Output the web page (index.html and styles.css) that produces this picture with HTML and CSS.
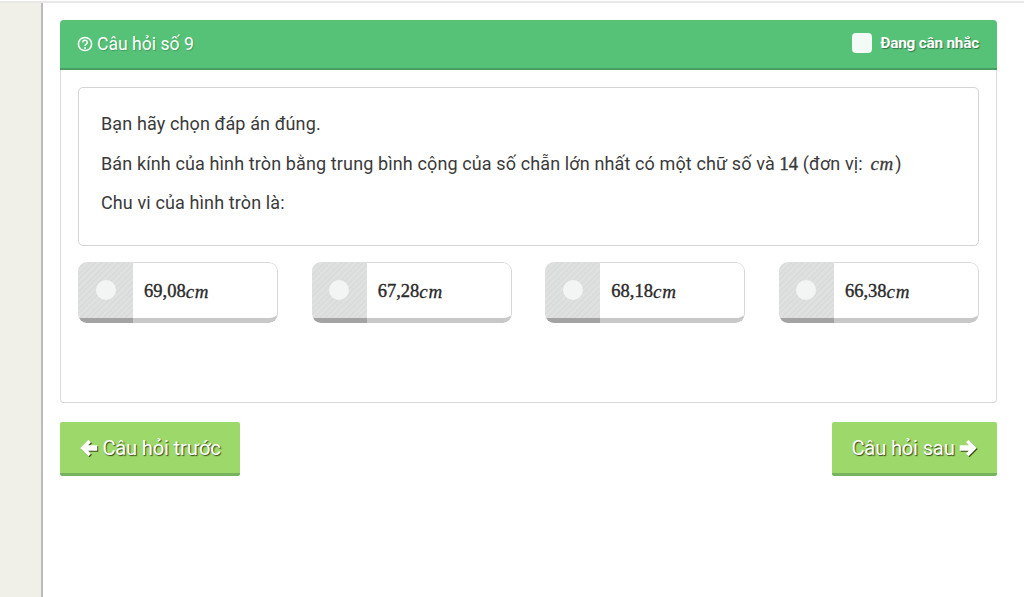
FILE: index.html
```html
<!DOCTYPE html>
<html lang="vi">

<head>
    <meta charset="UTF-8">
    <meta name="viewport" content="width=device-width, initial-scale=1.0">
    <title>Câu hỏi số 9</title>
    <link rel="stylesheet" href="styles.css">
</head>

<body>
    <div class="sidebar"></div>

    <main class="noi-dung">
        <section class="panel">
            <header class="panel-head">
                <h2 class="tieu-de">
                    <svg class="icon-hoi" viewBox="0 0 16 16" width="16" height="16">
                        <circle cx="8" cy="8" r="6.6" fill="none" stroke="#fff" stroke-width="1.5" />
                        <path d="M5.8 6.4a2.2 2.2 0 1 1 3.4 1.8c-.8.5-1.2.9-1.2 1.8" fill="none" stroke="#fff" stroke-width="1.5" />
                        <circle cx="8" cy="12" r="1" fill="#fff" />
                    </svg>
                    Câu hỏi số 9
                </h2>
                <label class="can-nhac">
                    <span class="o-check"></span>
                    Đang cân nhắc
                </label>
            </header>

            <div class="panel-body">
                <div class="de-bai">
                    <p>Bạn hãy chọn đáp án đúng.</p>
                    <p>Bán kính của hình tròn bằng trung bình cộng của số chẵn lớn nhất có một chữ số và <span class="so">14</span> (đơn vị: <i class="don-vi">cm</i>)</p>
                    <p>Chu vi của hình tròn là:</p>
                </div>

                <div class="dap-an">
                    <div class="lua-chon">
                        <div class="nut-chon"><span class="cham"></span></div>
                        <div class="gia-tri"><span class="so">69,08</span><i class="don-vi">cm</i></div>
                    </div>
                    <div class="lua-chon">
                        <div class="nut-chon"><span class="cham"></span></div>
                        <div class="gia-tri"><span class="so">67,28</span><i class="don-vi">cm</i></div>
                    </div>
                    <div class="lua-chon">
                        <div class="nut-chon"><span class="cham"></span></div>
                        <div class="gia-tri"><span class="so">68,18</span><i class="don-vi">cm</i></div>
                    </div>
                    <div class="lua-chon">
                        <div class="nut-chon"><span class="cham"></span></div>
                        <div class="gia-tri"><span class="so">66,38</span><i class="don-vi">cm</i></div>
                    </div>
                </div>
            </div>
        </section>

        <nav class="dieu-huong">
            <a class="nut nut-truoc" href="#">
                <svg class="mui-ten" viewBox="0 0 16 16" width="20" height="20">
                    <path d="M7.6 1.4 1 8l6.6 6.6 2-2L7.4 10.2h7.2V5.8H7.4l2.2-2.4z" fill="#fff" />
                </svg>
                Câu hỏi trước
            </a>
            <a class="nut nut-sau" href="#">
                Câu hỏi sau
                <svg class="mui-ten" viewBox="0 0 16 16" width="20" height="20">
                    <path d="M8.4 1.4 15 8l-6.6 6.6-2-2 2.2-2.4H1.4V5.8h7.2L6.4 3.4z" fill="#fff" />
                </svg>
            </a>
        </nav>
    </main>
</body>

</html>
```

FILE: styles.css
```css
* {
    box-sizing: border-box;
}

html,
body {
    height: 100%;
}

body {
    display: flex;
    margin: 0;
    overflow: hidden;
    background-color: #fff;
    border-top: 2px solid #e8e8e8;
    margin-top: 1px;
    font-family: Roboto, "Liberation Sans", sans-serif;
    color: #3a3a3a;
}

.sidebar {
    flex: 0 0 43px;
    margin-top: -3px;
    background-color: #f0f0e8;
    border-right: 2px solid #bcbcbc;
}

.noi-dung {
    flex: 1;
    padding: 17px 27px 0 17px;
}

.panel {
    height: 383px;
    background-color: #fff;
    border: 1px solid #d9d9d9;
    border-top: 0;
    border-radius: 4px;
}

.panel-head {
    display: flex;
    align-items: center;
    justify-content: space-between;
    height: 50px;
    margin: 0 -1px;
    padding: 0 18px 0 17px;
    background-color: #55c277;
    border-bottom: 2px solid #4a9e62;
    border-radius: 4px 4px 0 0;
    color: #fff;
}

.tieu-de {
    display: flex;
    align-items: center;
    gap: 4px;
    margin: 0;
    font-size: 17.6px;
    font-weight: 400;
    text-shadow: 1px 1px 1px rgba(0, 0, 0, 0.2);
}

.can-nhac {
    display: flex;
    align-items: center;
    gap: 8px;
    margin-top: -2px;
    font-size: 15.3px;
    font-weight: 700;
    letter-spacing: -0.2px;
    text-shadow: 1px 1px 1px rgba(0, 0, 0, 0.4);
}

.o-check {
    width: 20px;
    height: 20px;
    background-color: #f4fbf6;
    border-radius: 4px;
}

.panel-body {
    padding: 17px 17px 0;
}

.de-bai {
    height: 159px;
    padding: 26px 22px 0;
    border: 1px solid #d4d4d4;
    border-radius: 5px;
    font-size: 18px;
    letter-spacing: 0.12px;
    line-height: 20px;
}

.de-bai p {
    margin: 0 0 19.5px;
}

.de-bai .don-vi {
    margin-left: 3px;
    margin-right: 1px;
}

.so {
    font-family: "Liberation Serif", serif;
    font-size: 18.5px;
    -webkit-text-stroke: 0.4px;
}

.don-vi {
    font-family: "Liberation Serif", serif;
    font-size: 19px;
    letter-spacing: 0.8px;
    -webkit-text-stroke: 0.3px;
}

.dap-an {
    display: flex;
    justify-content: space-between;
    margin-top: 16px;
}

.lua-chon {
    display: flex;
    width: 200px;
    height: 61px;
    background-color: #fff;
    border-radius: 9px;
    overflow: hidden;
}

.nut-chon {
    display: flex;
    align-items: center;
    justify-content: center;
    flex: 0 0 55px;
    background: repeating-linear-gradient(135deg, #dadcdb 0, #dadcdb 2px, #dfe1e0 2px, #dfe1e0 4px);
    border-bottom: 5px solid #a3a3a3;
}

.cham {
    width: 20px;
    height: 20px;
    background-color: #f3f4f4;
    border-radius: 50%;
}

.gia-tri {
    display: flex;
    flex: 1;
    align-items: center;
    padding: 2px 0 0 11px;
    border: 1px solid #d8d8d8;
    border-left: 0;
    border-bottom: 5px solid #c8c8c8;
    border-radius: 0 9px 9px 0;
    color: #2a2a2a;
}

.dieu-huong {
    display: flex;
    justify-content: space-between;
    margin-top: 19px;
}

.nut {
    display: flex;
    align-items: center;
    justify-content: center;
    gap: 3px;
    height: 54px;
    background-color: #9cd86a;
    border-bottom: 3px solid #77b35f;
    border-radius: 2px;
    color: #fff;
    font-size: 20.2px;
    letter-spacing: -0.2px;
    text-decoration: none;
    text-shadow: 1px 1px 1px rgba(50, 60, 15, 0.9);
}

.nut-truoc {
    width: 180px;
}

.nut-sau {
    width: 165px;
}

.mui-ten {
    filter: drop-shadow(1px 1px 0 rgba(50, 60, 15, 0.9));
}
```
